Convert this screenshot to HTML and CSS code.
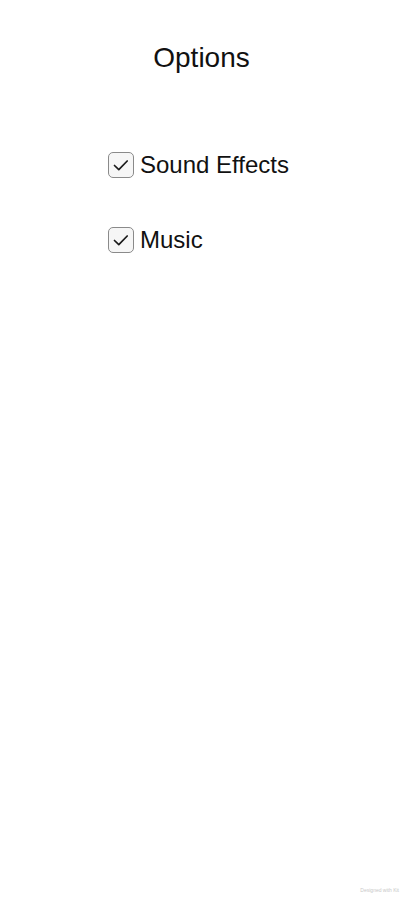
FILE: index.html
```html
<!DOCTYPE html>
<html>
<head>
<meta charset="utf-8">
<link rel="stylesheet" href="styles.css">
</head>
<body>
<div class="page">
  <h1 class="title">Options</h1>
  <div class="options">
    <label class="option">
      <span class="box"><svg viewBox="0 0 24 24" width="24" height="24"><path d="M5.5 12.5 L9.8 16.6 L18.2 8" fill="none" stroke="#1a1a1a" stroke-width="1.7" stroke-linecap="round" stroke-linejoin="round"/></svg></span>
      <span class="label">Sound Effects</span>
    </label>
    <label class="option">
      <span class="box"><svg viewBox="0 0 24 24" width="24" height="24"><path d="M5.5 12.5 L9.8 16.6 L18.2 8" fill="none" stroke="#1a1a1a" stroke-width="1.7" stroke-linecap="round" stroke-linejoin="round"/></svg></span>
      <span class="label">Music</span>
    </label>
  </div>
  <div class="footer">Designed with Kit</div>
</div>
</body>
</html>
```
FILE: styles.css
```css
html, body {
  margin: 0;
  padding: 0;
  background: #ffffff;
}
.page {
  width: 403px;
  height: 900px;
  display: flex;
  flex-direction: column;
  font-family: "Liberation Sans", Arial, sans-serif;
  color: #111;
}
.title {
  margin: 41px 0 0 0;
  font-weight: normal;
  font-size: 28px;
  line-height: 34px;
  text-align: center;
}
.options {
  display: flex;
  flex-direction: column;
  gap: 47px;
  margin: 76px 0 0 108px;
}
.option {
  display: flex;
  align-items: center;
  gap: 6px;
  height: 28px;
}
.box {
  width: 24px;
  height: 24px;
  border: 1px solid #8a8a8a;
  border-radius: 5px;
  background: #f6f6f6;
  display: flex;
  align-items: center;
  justify-content: center;
}
.box svg {
  width: 24px;
  height: 24px;
}
.label {
  font-size: 24px;
  line-height: 28px;
  color: #111;
}
.footer {
  margin-top: auto;
  align-self: flex-end;
  font-size: 5px;
  color: #c8c8c8;
  margin-right: 4px;
  margin-bottom: 7px;
}
```
